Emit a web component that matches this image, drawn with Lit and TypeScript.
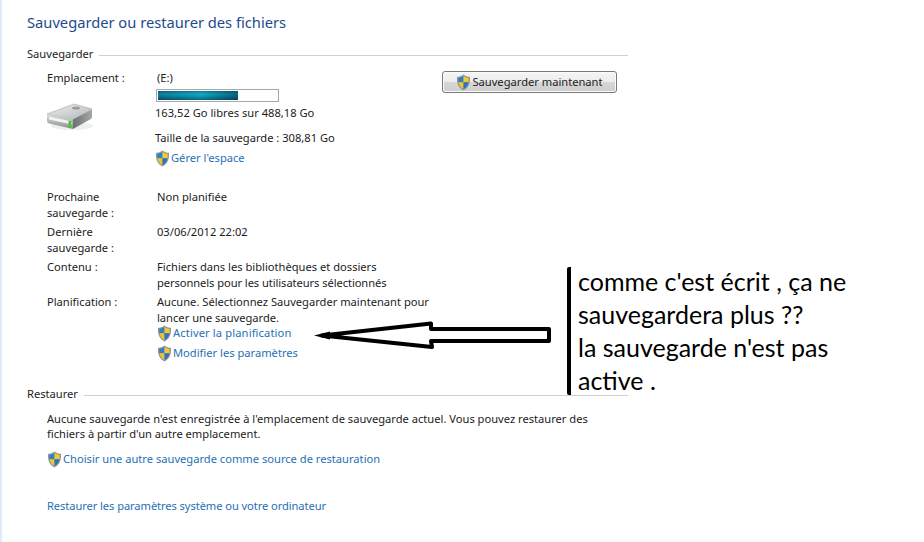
import { LitElement, html, css, svg } from "lit";
import { customElement } from "lit/decorators.js";

const shield = html`<svg class="shield" viewBox="0 0 14 16" aria-hidden="true">
  <path d="M7 .4C5.300 1.800 3 2.500.9 2.600c-.4 5.600.9 10.200 6.100 13 5.200-2.800 6.500-7.400 6.100-13C11 2.500 8.700 1.800 7 .4z" fill="#8f979c"/>
  <path d="M7 1.900C5.600 2.900 3.900 3.500 2.200 3.700 2.100 4.900 2.100 6 2.300 7.800H7z" fill="#2f7fc9"/>
  <path d="M7 1.900V7.800h4.700c.2-1.800.2-2.900.1-4.100C10.100 3.500 8.400 2.900 7 1.900z" fill="#f3c92f"/>
  <path d="M2.300 7.800c.5 2.800 2 4.900 4.700 6.400V7.800z" fill="#f0c42a"/>
  <path d="M7 7.800v6.400c2.700-1.500 4.200-3.600 4.700-6.400z" fill="#2a74bd"/>
</svg>`;

const drive = html`<svg class="drive" viewBox="0 0 48 28" aria-hidden="true">
  <defs>
    <linearGradient id="dt" x1="0" y1="0" x2="1" y2="1"><stop offset="0" stop-color="#eef0f0"/><stop offset="1" stop-color="#b4b7b7"/></linearGradient>
    <linearGradient id="df" x1="0" y1="0" x2="0" y2="1"><stop offset="0" stop-color="#dcdede"/><stop offset="1" stop-color="#8d9090"/></linearGradient>
    <linearGradient id="ds" x1="0" y1="0" x2="1" y2="0"><stop offset="0" stop-color="#6e7172"/><stop offset="1" stop-color="#a4a7a8"/></linearGradient>
  </defs>
  <ellipse cx="26" cy="23" rx="21" ry="4" fill="#e2e2e2" opacity=".6"/>
  <path d="M1 11 28 1l18 5-18 10.500z" fill="url(#dt)" stroke="#a3a6a6" stroke-width=".6"/>
  <path d="M1 11 27 16.500V26L3 20.500C1.500 20 1 19 1 18z" fill="url(#df)"/>
  <path d="M27 16.500 46 6.500V14c0 1-.5 1.500-1.500 2.200L27 26z" fill="url(#ds)"/>
  <path d="M3 13.500 26 18.500v3L3 16.500z" fill="#f1f2f2"/>
  <rect x="22.500" y="18" width="3" height="7" fill="#4fc23a"/>
  <ellipse cx="30" cy="5" rx="4" ry="1.600" fill="#9a9d9d"/>
</svg>`;

const arrow = svg`
  <polygon points="322,335.500 431,323.500 431,329 549,329 549,341 431,341 432,347" fill="#fff" stroke="#000" stroke-width="4" stroke-linejoin="round"/>
  <polygon points="314,335.500 330,331.500 330,339.500" fill="#000"/>`;

@customElement("app-root")
export class AppRoot extends LitElement {
  static styles = css`
    :host {
      display: block;
      position: relative;
      width: 924px;
      height: 542px;
      overflow: hidden;
      background: #fff;
      font-family: "Noto Sans", "Open Sans", sans-serif;
      font-size: 11.150px;
      line-height: 16px;
      color: #1c1c1c;
    }
    .page {
      box-sizing: border-box;
      width: 924px;
      height: 542px;
      padding: 10px 0 0 25px;
      border-left: 2px solid #e0eaf8;
    }
    .title {
      margin: 0;
      width: 400px;
      font-size: 14.700px;
      line-height: 24px;
      font-weight: 400;
      color: #1d4a8c;
    }
    .section {
      display: flex;
      align-items: center;
      gap: 6px;
      width: 601px;
      margin-top: 12px;
    }
    .section .rule {
      flex: 1;
      height: 1px;
      margin-top: 2px;
      background: #cfcfcf;
    }
    .restore-section { margin-top: 25px; }
    .indent { margin-left: 20px; }
    .top { display: flex; margin-top: 8px; }
    .label { width: 110px; flex: none; }
    .drive { display: block; width: 48px; height: 28px; margin-top: 17px; margin-left: -1px; }
    .vals { width: 285px; flex: none; }
    .bar {
      box-sizing: border-box;
      width: 123px;
      height: 13px;
      margin: 3px 0 3px -1px;
      padding: 1px;
      border: 1px solid #a8a8a8;
      background: #fff;
    }
    .fill {
      width: 67.500%;
      height: 100%;
      background:
        linear-gradient(90deg, rgba(10, 60, 90, .35), rgba(20, 190, 210, .2) 55%, rgba(5, 50, 70, .55)),
        linear-gradient(#0b6e88, #12a6c4 35%, #0a7f9c 70%, #06505f);
    }
    .free { margin-left: -2px; }
    .size { margin: 9px 0 0 -2px; }
    .link {
      display: flex;
      align-items: center;
      height: 16px;
      color: #1f6fb5;
    }
    .shield { width: 15px; height: 17px; flex: none; margin-right: 1px; }
    .manage { margin: 4px 0 0 -2px; }
    .btn {
      box-sizing: border-box;
      display: flex;
      align-items: center;
      justify-content: center;
      width: 175px;
      height: 22px;
      margin-top: 1px;
      border: 1px solid #7a7a7a;
      border-radius: 3px;
      background: linear-gradient(#f6f6f6, #ececec 48%, #d6d6d6 52%, #cfcfcf);
      box-shadow: inset 0 0 0 1px #fbfbfb;
      color: #1c1c1c;
      font: inherit;
      padding: 0;
    }
    .rows { margin-top: 23px; display: grid; grid-template-columns: 110px 285px; row-gap: 3px; }
    .rows .links { grid-column: 2; margin-top: -4px; display: grid; row-gap: 4px; }
    .activate { letter-spacing: .13px; }
    .tight { letter-spacing: -.07px; }
    .restore-text { width: 560px; margin: 9px 0 0 20px; line-height: 15px; }
    .choose { margin-top: 10px; }
    .sys { margin-top: 31px; letter-spacing: -.08px; }
    .note {
      position: absolute;
      left: 567px;
      top: 267px;
      box-sizing: border-box;
      height: 128px;
      width: 320px;
      padding-left: 7px;
      border-left: 4px solid #000;
      border-radius: 2px;
      font-family: Lato, "Open Sans", sans-serif;
      font-size: 25px;
      line-height: 33px;
      color: #000;
    }
    .note-text { margin-top: -2px; }
    .arrow {
      position: absolute;
      left: 0;
      top: 0;
      width: 924px;
      height: 542px;
      pointer-events: none;
    }
  `;

  render() {
    return html`
      <div class="page">
        <h1 class="title">Sauvegarder ou restaurer des fichiers</h1>
        <div class="section"><span>Sauvegarder</span><div class="rule"></div></div>
        <div class="indent top">
          <div class="label">Emplacement :${drive}</div>
          <div class="vals">
            <div>(E:)</div>
            <div class="bar"><div class="fill"></div></div>
            <div class="free">163,52 Go libres sur 488,18 Go</div>
            <div class="size">Taille de la sauvegarde : 308,81 Go</div>
            <div class="link manage">${shield}Gérer l'espace</div>
          </div>
          <button class="btn">${shield}Sauvegarder maintenant</button>
        </div>
        <div class="indent rows">
          <div>Prochaine<br />sauvegarde :</div>
          <div>Non planifiée</div>
          <div>Dernière<br />sauvegarde :</div>
          <div>03/06/2012 22:02</div>
          <div>Contenu :</div>
          <div>Fichiers dans les bibliothèques et dossiers<br /><span class="tight">personnels pour les utilisateurs sélectionnés</span></div>
          <div>Planification :</div>
          <div>Aucune. Sélectionnez Sauvegarder maintenant pour<br />lancer une sauvegarde.</div>
          <div class="links">
            <div class="link activate">${shield}Activer la planification</div>
            <div class="link">${shield}Modifier les paramètres</div>
          </div>
        </div>
        <div class="section restore-section"><span>Restaurer</span><div class="rule"></div></div>
        <div class="restore-text">Aucune sauvegarde n'est enregistrée à l'emplacement de sauvegarde actuel. Vous pouvez restaurer des<br />fichiers à partir d'un autre emplacement.</div>
        <div class="indent link choose">${shield}Choisir une autre sauvegarde comme source de restauration</div>
        <div class="indent link sys">Restaurer les paramètres système ou votre ordinateur</div>
      </div>
      <svg class="arrow" viewBox="0 0 924 542" aria-hidden="true">${arrow}</svg>
      <div class="note"><div class="note-text">comme c'est écrit , ça ne<br />sauvegardera plus ??<br />la sauvegarde n'est pas<br />active .</div></div>
    `;
  }
}
